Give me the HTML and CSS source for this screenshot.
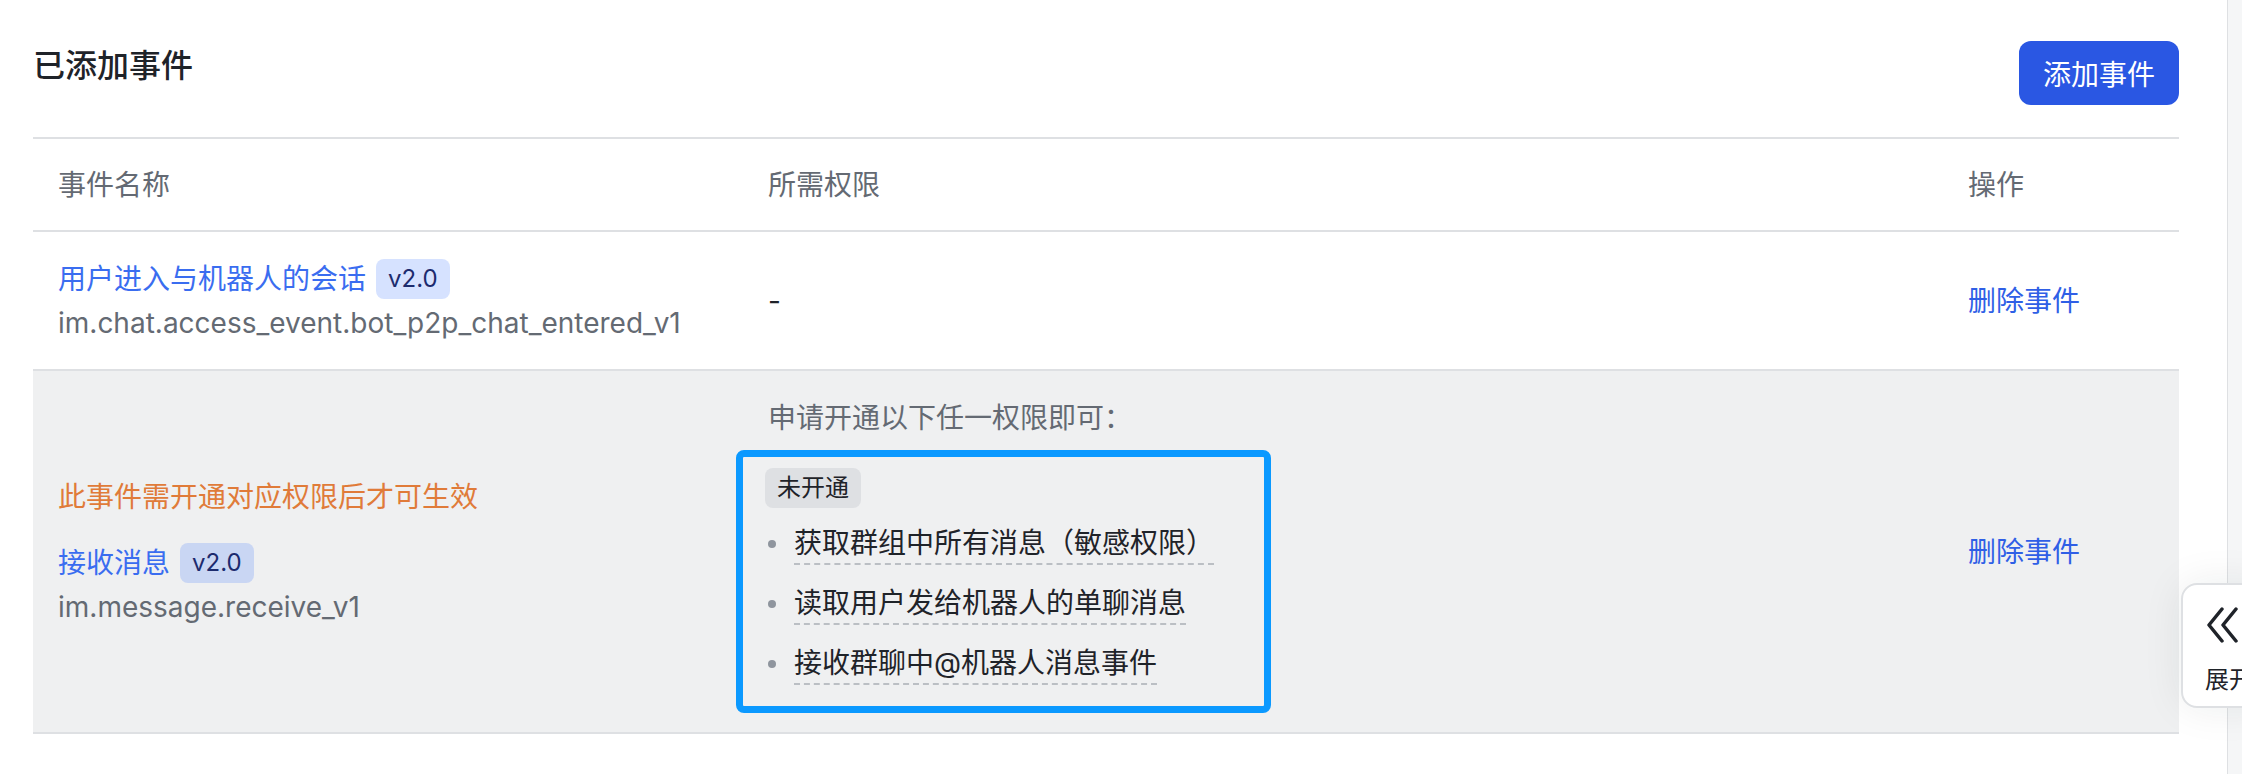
FILE: index.html
```html
<!DOCTYPE html>
<html lang="zh-CN">
<head>
  <meta charset="UTF-8" />
  <meta name="viewport" content="width=device-width, initial-scale=1" />
  <title>事件配置</title>
  <link rel="stylesheet" href="styles.css">
</head>
<body>
  <div class="page">
    <main class="content">
      <div class="section-head">
        <h2 class="section-title">已添加事件</h2>
        <button class="btn-primary" type="button">添加事件</button>
      </div>

      <div class="event-table">
        <div class="row row-head">
          <div class="cell">事件名称</div>
          <div class="cell">所需权限</div>
          <div class="cell">操作</div>
        </div>

        <div class="row">
          <div class="cell">
            <div class="event-name">
              <a href="#">用户进入与机器人的会话</a>
              <span class="ver">v2.0</span>
            </div>
            <div class="event-key">im.chat.access_event.bot_p2p_chat_entered_v1</div>
          </div>
          <div class="cell cell-dark">-</div>
          <div class="cell"><a class="action" href="#">删除事件</a></div>
        </div>

        <div class="row row-warn">
          <div class="cell">
            <div class="warn-text">此事件需开通对应权限后才可生效</div>
            <div class="event-name">
              <a href="#">接收消息</a>
              <span class="ver">v2.0</span>
            </div>
            <div class="event-key">im.message.receive_v1</div>
          </div>
          <div class="cell cell-perm">
            <div class="perm-hint">申请开通以下任一权限即可：</div>
            <div class="perm-box">
              <span class="tag">未开通</span>
              <ul class="perm-list">
                <li><span>获取群组中所有消息（敏感权限）</span></li>
                <li><span>读取用户发给机器人的单聊消息</span></li>
                <li><span>接收群聊中@机器人消息事件</span></li>
              </ul>
            </div>
          </div>
          <div class="cell"><a class="action" href="#">删除事件</a></div>
        </div>
      </div>
    </main>

    <aside class="side-strip"></aside>

    <div class="expand-tab">
      <svg width="40" height="36" viewBox="0 0 40 36">
        <path d="M17 2 L4 18 L17 34 M31 2 L18 18 L31 34" fill="none" stroke="#1f2329" stroke-width="3.5" stroke-linecap="round" stroke-linejoin="round"/>
      </svg>
      <span>展开</span>
    </div>
  </div>
</body>
</html>
```

FILE: styles.css
```css
html, body {
  margin: 0;
  height: 100%;
  overflow: hidden;
}

body {
  font-family: "Inter", "Noto Sans CJK SC", sans-serif;
  font-size: 28px;
  color: #1f2329;
  background: #fff;
}

a {
  text-decoration: none;
}

.page {
  position: relative;
  display: flex;
  height: 100%;
}

.content {
  flex: 1;
  padding: 41px 48px 0 33px;
}

.side-strip {
  width: 14px;
  border-left: 1px solid #dee0e3;
  background: #f5f6f7;
}

/* header */
.section-head {
  display: flex;
  justify-content: space-between;
  align-items: flex-start;
  margin-bottom: 32px;
}

.section-title {
  margin: 0;
  font-size: 32px;
  font-weight: 500;
  line-height: 50px;
}

.btn-primary {
  height: 64px;
  padding: 0 24px;
  border: none;
  border-radius: 12px;
  background: #2a57e3;
  color: #fff;
  font-family: inherit;
  font-size: 28px;
  cursor: pointer;
}

/* table */
.event-table {
  border-top: 2px solid #dee0e3;
}

.row {
  display: grid;
  grid-template-columns: 710px 1200px 1fr;
  align-items: center;
  min-height: 137px;
  border-bottom: 2px solid #dee0e3;
}

.row-head {
  min-height: 91px;
  color: #646a73;
}

.row-warn {
  background: #eff0f1;
}

.cell {
  padding: 0 25px;
  line-height: 40px;
}

.cell-dark {
  color: #1f2329;
}

.event-name {
  display: flex;
  align-items: center;
  height: 40px;
  margin-bottom: 4px;
}

.event-name a {
  color: #3a6df0;
}

.ver {
  margin-left: 10px;
  padding: 0 12px;
  height: 40px;
  line-height: 40px;
  border-radius: 8px;
  background: rgba(51, 112, 255, 0.2);
  color: #1c2b6e;
  font-size: 24px;
}

.event-key {
  color: #646a73;
}

.action {
  color: #2f5fe6;
}

.warn-text {
  color: #e07b39;
  margin-bottom: 26px;
}

/* permissions */
.cell-perm {
  padding-top: 27px;
  padding-bottom: 19px;
}

.perm-hint {
  color: #646a73;
  margin-bottom: 12px;
}

.perm-box {
  box-sizing: border-box;
  width: 535px;
  margin-left: -32px;
  padding: 9px 22px 21px;
  border: 7px solid #0b99ff;
  border-radius: 8px;
}

.tag {
  display: inline-block;
  padding: 0 12px;
  line-height: 40px;
  border-radius: 8px;
  background: #dee0e3;
  font-size: 24px;
}

.perm-list {
  list-style: none;
  margin: 15px 0 0;
  padding: 0 0 0 3px;
}

.perm-list li {
  display: flex;
  align-items: center;
  margin-top: 18px;
}

.perm-list li:first-child {
  margin-top: 0;
}

.perm-list li::before {
  content: "";
  width: 8px;
  height: 8px;
  margin-right: 18px;
  border-radius: 50%;
  background: #8f959e;
}

.perm-list li span {
  border-bottom: 2px dashed #bbbfc4;
}

/* floating tab */
.expand-tab {
  position: absolute;
  left: 2181px;
  top: 583px;
  width: 100px;
  height: 125px;
  box-sizing: border-box;
  padding: 22px 0 0 22px;
  border: 2px solid #dee0e3;
  border-radius: 16px;
  background: #fff;
  box-shadow: 0 0 40px rgba(31, 35, 41, 0.08);
  display: flex;
  flex-direction: column;
  align-items: flex-start;
}

.expand-tab span {
  margin-top: 19px;
  font-size: 24px;
  line-height: 36px;
}
```
